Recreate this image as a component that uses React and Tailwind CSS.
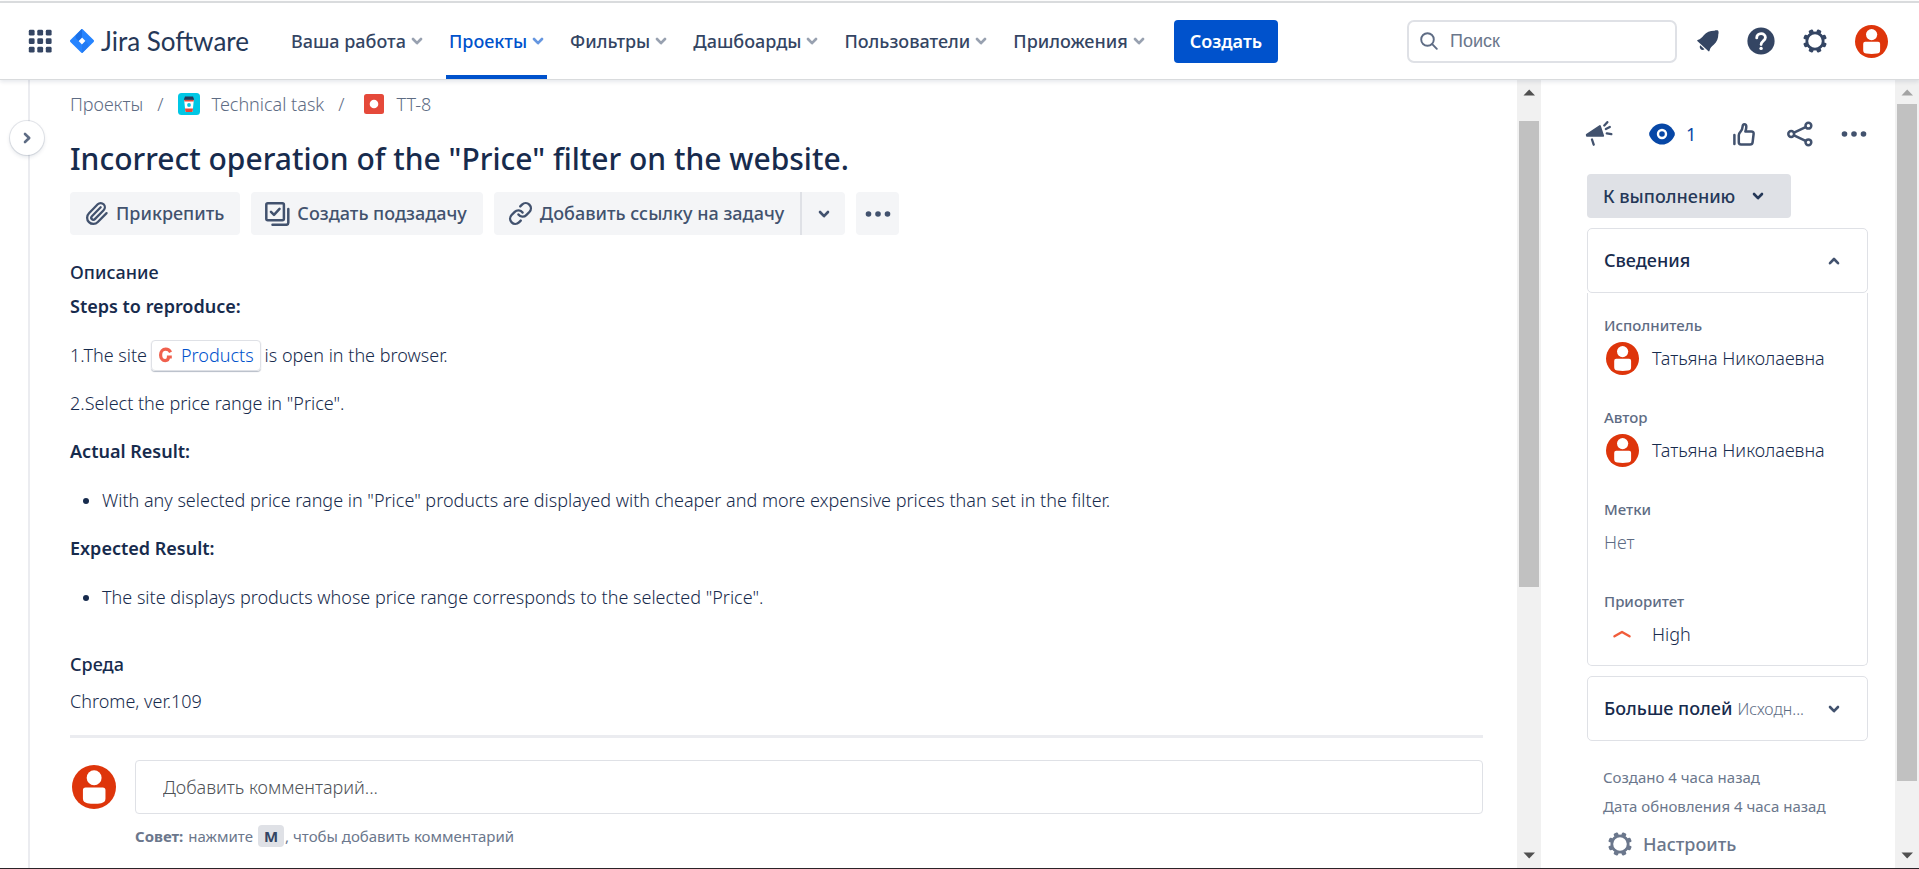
import { Paperclip, Link as LinkIcon } from 'lucide-react';

const navItems = [
  { label: 'Ваша работа' },
  { label: 'Проекты', active: true },
  { label: 'Фильтры' },
  { label: 'Дашбоарды' },
  { label: 'Пользователи' },
  { label: 'Приложения' },
];

function Chevron({ className = '', up = false }) {
  return (
    <svg viewBox="0 0 12 12" className={`h-3 w-3 shrink-0 ${className}`} fill="none" stroke="currentColor" strokeWidth="2.6" strokeLinecap="round" strokeLinejoin="round" aria-hidden="true">
      <path d={up ? 'M2 8.2 6 4l4 4.2' : 'M2 4l4 4.2L10 4'} />
    </svg>
  );
}

function Avatar({ className }) {
  return (
    <svg viewBox="0 0 33 33" className={`shrink-0 ${className}`} aria-hidden="true">
      <circle cx="16.5" cy="16.5" r="16.5" fill="#de350b" />
      <circle cx="16.6" cy="9.6" r="5.6" fill="#fff" />
      <path d="M10.2 16.8h12.9a2 2 0 0 1 2 2v6.4c0 2.2-1.2 3.1-3.2 3.4-3.4.6-7 .6-10.4 0-2-.3-3.3-1.2-3.3-3.4v-6.4a2 2 0 0 1 2-2z" fill="#fff" />
    </svg>
  );
}

const teeth = [22.5, 67.5, 112.5, 157.5, 202.5, 247.5, 292.5, 337.5];

function Gear({ className }) {
  return (
    <svg viewBox="0 0 24 24" className={className} aria-hidden="true">
      <circle cx="12" cy="12" r="8.2" fill="none" stroke="currentColor" strokeWidth="2.8" />
      {teeth.map((a) => (
        <rect key={a} x="9.7" y="0.1" width="4.6" height="4.4" rx="1.2" fill="currentColor" transform={`rotate(${a} 12 12)`} />
      ))}
    </svg>
  );
}

function Dots({ className }) {
  return (
    <svg viewBox="0 0 26 8" className={className} fill="currentColor" aria-hidden="true">
      <circle cx="3.5" cy="4" r="2.8" />
      <circle cx="13" cy="4" r="2.8" />
      <circle cx="22.5" cy="4" r="2.8" />
    </svg>
  );
}

function ScrollBar({ thumb, upColor }) {
  return (
    <div className="flex w-6 shrink-0 flex-col bg-[#f1f1f1]" aria-hidden="true">
      <svg viewBox="0 0 24 24" className={`h-6 w-6 shrink-0 ${upColor}`} fill="currentColor"><path d="M6.5 15.5h11.5L12.2 9.5z" /></svg>
      <div className="flex min-h-0 flex-1 flex-col px-[2px]">{thumb}</div>
      <svg viewBox="0 0 24 24" className="h-6 w-6 shrink-0 text-[#505050]" fill="currentColor"><path d="M6.5 8.5h11.5l-5.8 6z" /></svg>
    </div>
  );
}

function Header() {
  return (
    <header className="relative z-10 mt-px flex h-[79px] shrink-0 items-stretch border-t-2 border-b border-[#d9dbdd] bg-white pr-[31px] pl-7 shadow-[0_2px_4px_rgba(9,30,66,0.10)]">
      <button type="button" aria-label="Приложения Atlassian" className="text-[#344563]">
        <svg viewBox="0 0 24 24" className="h-6 w-6" fill="currentColor" aria-hidden="true">
          {[0.8, 9.3, 17.8].map((y) => [0.8, 9.3, 17.8].map((x) => <rect key={`${x}-${y}`} x={x} y={y} width="5.8" height="5.8" rx="1.4" />))}
        </svg>
      </button>
      <a href="#home" className="ml-[18px] flex items-center gap-[7px]">
        <svg viewBox="0 0 24 24" className="h-6 w-6" aria-hidden="true">
          <path fillRule="evenodd" d="M11.1.4a1.3 1.3 0 0 1 1.8 0l10.700 10.700a1.3 1.3 0 0 1 0 1.800L12.900 23.600a1.3 1.3 0 0 1-1.800 0L.4 12.900a1.3 1.3 0 0 1 0-1.800zM12 8.600 8.600 12l3.400 3.400 3.400-3.400z" fill="#2684ff" />
          <path d="M11.100.4 12 .1v8.500L8.600 12 6.200 9.600C5 8.300 5.500 6.600 6.800 5.200z" fill="#1768dd" opacity=".75" />
          <path d="M12.900 23.600 12 23.900v-8.500l3.400-3.400 2.400 2.400c1.200 1.300.7 3-.6 4.400z" fill="#1f74ec" opacity=".6" />
        </svg>
        <span className="font-['Lato'] text-[26px] leading-8 text-[#253858]">Jira Software</span>
      </a>
      <nav className="ml-[39px] flex items-stretch gap-5">
        {navItems.map((item) => (
          <button
            key={item.label}
            type="button"
            className={`flex items-center gap-[5px] border-b-4 px-[3px] pt-1 text-[18px] font-medium whitespace-nowrap ${item.active ? 'border-[#0052cc] text-[#0052cc]' : 'border-transparent text-[#344563]'}`}
          >
            {item.label}
            <Chevron className={item.active ? 'text-[#0052cc] opacity-60' : 'opacity-50'} />
          </button>
        ))}
      </nav>
      <button type="button" className="ml-[26px] h-[43px] self-center rounded-[4px] bg-[#0052cc] px-4 text-[18px] font-semibold text-white">Создать</button>
      <div className="ml-auto flex items-center">
        <label className="flex h-[43px] w-[270px] items-center rounded-[7px] border-2 border-[#dfe1e6] pl-[11px]">
          <svg viewBox="0 0 18 18" className="h-[18px] w-[18px] shrink-0 text-[#5e6c84]" fill="none" stroke="currentColor" strokeWidth="1.9" strokeLinecap="round" aria-hidden="true">
            <circle cx="7.500" cy="7.500" r="6.300" />
            <path d="m12.200 12.200 4.600 4.600" />
          </svg>
          <input type="search" aria-label="Поиск" placeholder="Поиск" className="ml-3 w-full min-w-0 bg-transparent font-['Liberation_Sans'] text-[18px] outline-none placeholder:text-[#6b778c]" />
        </label>
        <button type="button" aria-label="Уведомления" className="ml-5 text-[#344563]">
          <svg viewBox="0 0 22 23" className="h-[23px] w-[22px]" fill="currentColor" aria-hidden="true">
            <path d="M.6 11.200C-.1 10.600 0 10.100.7 9.900c2.800-.7 4.500-2.700 6.100-4.700C9.500 1.700 13.500.6 17.500.7c1.300-.5 3-.5 3.700 0 .5.900.5 2.200.1 3.500.1 4-1.200 8-4.600 10.600-2 1.500-3.600 3-4.200 6-.2.7-.7.8-1.300.3z" />
            <path d="M3.200 15.300 7.500 19.300c-1.200 1-2.800 1-3.800 0s-1.300-2.800-.5-4z" />
          </svg>
        </button>
        <button type="button" aria-label="Справка" className="ml-[28px] text-[#344563]">
          <svg viewBox="0 0 28 28" className="h-7 w-7" aria-hidden="true">
            <circle cx="14" cy="14" r="13.600" fill="currentColor" />
            <path d="M9.700 10.900c0-2.600 1.900-4.300 4.400-4.300 2.500 0 4.300 1.600 4.300 3.900 0 1.900-1.100 2.900-2.500 3.800-1.300.9-1.800 1.500-1.800 3.200" fill="none" stroke="#fff" strokeWidth="2.800" strokeLinecap="round" />
            <circle cx="14.100" cy="21.400" r="1.700" fill="#fff" />
          </svg>
        </button>
        <button type="button" aria-label="Настройки" className="ml-[28px] text-[#344563]"><Gear className="h-6 w-6" /></button>
        <button type="button" aria-label="Профиль" className="ml-[28px]"><Avatar className="h-[33px] w-[33px]" /></button>
      </div>
    </header>
  );
}

const toolButton = 'flex h-[43px] items-center gap-[7px] bg-[#f4f5f7] pr-4 pl-[14px] text-[18px] font-medium text-[#42526e]';

function Issue() {
  return (
    <main className="min-w-0 flex-1 overflow-hidden pr-[34px] pl-10 text-[#172b4d]">
      <nav aria-label="Навигация" className="mt-3 flex h-6 items-center text-[18px] font-light text-[#5e6c84]">
        <a href="#projects">Проекты</a>
        <span className="mx-[14px]">/</span>
        <a href="#tt" className="flex items-center gap-3">
          <svg viewBox="0 0 22 22" className="h-[22px] w-[22px]" aria-hidden="true">
            <rect width="22" height="22" rx="3.500" fill="#00c7e5" />
            <path d="M6.200 7h9.600l-1.100 11.200a1 1 0 0 1-1 .8H8.300a1 1 0 0 1-1-.8z" fill="#fff" />
            <path d="M6.200 6.600h9.600l-.2 2H6.400zM7 15.500h8l-.3 2.700a1 1 0 0 1-1 .8H8.300a1 1 0 0 1-1-.8z" fill="#e5493a" />
            <path d="M7 3.400h8l1.200 3.400H5.800z" fill="#253858" />
            <circle cx="11" cy="12" r="1.900" fill="#00c7e5" />
          </svg>
          Technical task
        </a>
        <span className="mx-[14px]">/</span>
        <a href="#tt-8" className="ml-[6px] flex items-center gap-3">
          <svg viewBox="0 0 20 20" className="h-5 w-5" aria-hidden="true">
            <rect width="20" height="20" rx="2.500" fill="#e5493a" />
            <circle cx="10" cy="10" r="4.300" fill="#fff" />
          </svg>
          TT-8
        </a>
      </nav>

      <h1 className="mt-[25px] text-[30px] leading-9 font-medium">Incorrect operation of the "Price" filter on the website.</h1>

      <div className="mt-[15px] flex gap-[11px]">
        <button type="button" className={`${toolButton} rounded-[4px]`}>
          <Paperclip size={25} strokeWidth={2.2} aria-hidden="true" />
          Прикрепить
        </button>
        <button type="button" className={`${toolButton} rounded-[4px]`}>
          <svg viewBox="0 0 25 24" className="h-6 w-[25px]" fill="none" stroke="currentColor" strokeWidth="2.500" strokeLinecap="round" strokeLinejoin="round" aria-hidden="true">
            <rect x="1.300" y="1.300" width="17.600" height="17" rx="1.500" />
            <path d="m6 9.800 3 3 5.500-6M23.300 7v13.800a2 2 0 0 1-2 2H7.500" />
          </svg>
          Создать подзадачу
        </button>
        <div className="flex">
          <button type="button" className={`${toolButton} rounded-l-[4px] border-r-2 border-[#dfe1e6]`}>
            <LinkIcon size={25} strokeWidth={2.300} aria-hidden="true" />
            Добавить ссылку на задачу
          </button>
          <button type="button" aria-label="Ещё варианты ссылки" className="flex h-[43px] w-[43px] items-center justify-center rounded-r-[4px] bg-[#f4f5f7] text-[#42526e]"><Chevron /></button>
        </div>
        <button type="button" aria-label="Другие действия" className="flex h-[43px] w-[43px] items-center justify-center rounded-[4px] bg-[#f4f5f7] text-[#42526e]"><Dots className="h-2 w-[26px]" /></button>
      </div>

      <section className="text-[18px] leading-6 font-light">
        <h2 className="mt-[25px] font-medium">Описание</h2>
        <h3 className="mt-[10px] font-semibold">Steps to reproduce:</h3>
        <p className="mt-[25px] flex h-6 items-center gap-1">
          <span>1.The site</span>
          <a href="#products" className="flex h-[31px] items-center gap-2 rounded-[4px] border border-[#dfe1e6] px-[6px] text-[#0052cc] shadow-[0_1px_1px_rgba(9,30,66,0.30)]">
            <svg viewBox="0 0 15 16" className="h-4 w-[15px]" fill="none" stroke="#f0604d" strokeWidth="3.200" aria-hidden="true">
              <path d="M12.600 5.300C11.400 2.900 9.600 2.200 7.700 2.200 4.700 2.200 2.600 4.700 2.600 8c0 3.200 2 5.600 4.600 5.600 2.700 0 3.300-1.700 3.300-3.600h3.300" />
            </svg>
            Products
          </a>
          <span>is open in the browser.</span>
        </p>
        <p className="mt-6">2.Select the price range in "Price".</p>
        <h3 className="mt-6 font-semibold">Actual Result:</h3>
        <ul className="mt-[25px] list-disc pl-8">
          <li>With any selected price range in "Price" products are displayed with cheaper and more expensive prices than set in the filter.</li>
        </ul>
        <h3 className="mt-6 font-semibold">Expected Result:</h3>
        <ul className="mt-[25px] list-disc pl-8">
          <li>The site displays products whose price range corresponds to the selected "Price".</li>
        </ul>
        <h2 className="mt-[43px] font-medium">Среда</h2>
        <p className="mt-[13px]">Chrome, ver.109</p>
      </section>

      <hr className="mt-[22px] border-t-3 border-[#ebecf0]" />

      <div className="mt-[22px] flex">
        <div className="w-[65px] shrink-0 pt-[5px] pl-[2px]"><Avatar className="h-11 w-11" /></div>
        <div className="min-w-0 flex-1">
          <input type="text" aria-label="Добавить комментарий" placeholder="Добавить комментарий..." className="h-[54px] w-full rounded-[4px] border border-[#dfe1e6] px-[27px] text-[18px] font-light outline-none placeholder:text-[#4f5358]" />
          <p className="mt-[11px] flex h-[22px] items-center gap-[5px] text-[15px] text-[#6b778c]">
            <b>Совет:</b>
            <span>нажмите</span>
            <span className="flex items-center">
              <kbd className="mr-px rounded-[4px] bg-[#dfe1e6] px-[6px] font-[inherit] text-[15px] leading-[22px] font-bold text-[#344563]">M</kbd>
              , чтобы добавить комментарий
            </span>
          </p>
        </div>
      </div>
    </main>
  );
}

function Field({ label, children }) {
  return (
    <div>
      <dt className="text-[15px] leading-[21px] font-medium text-[#5e6c84]">{label}</dt>
      <dd className="flex h-11 items-center text-[18px] font-light text-[#172b4d]">{children}</dd>
    </div>
  );
}

function Details() {
  return (
    <aside className="w-[354px] shrink-0 overflow-hidden pr-[27px] pl-[46px]">
      <div className="mt-[40px] flex h-7 items-center text-[#42526e]">
        <button type="button" aria-label="Оставить отзыв" className="-ml-[2px]">
          <svg viewBox="0 0 28 26" className="h-[26px] w-7" fill="none" stroke="currentColor" strokeWidth="2.300" strokeLinecap="round" strokeLinejoin="round" aria-hidden="true">
            <path d="M1.700 13.700 14.900 4.900l3.300 10H1.900z" fill="currentColor" strokeWidth="1.800" />
            <path d="m7 18.500 1.700 5.200M19.300 4.500l3-3.300M20.900 8l3.900-2M21.800 12.300l4.500.9" />
          </svg>
        </button>
        <button type="button" aria-label="Наблюдатели: 1" className="ml-9 flex items-center gap-[11px] text-[18px] text-[#0747a6]">
          <svg viewBox="0 0 26 22" className="h-[22px] w-[26px]" aria-hidden="true">
            <path d="M13 .4c6 0 10.500 4.300 12.600 9.100.4 1 .4 2 0 3C23.500 17.300 19 21.600 13 21.600S2.500 17.300.4 12.500c-.4-1-.4-2 0-3C2.500 4.700 7 .4 13 .4z" fill="currentColor" />
            <circle cx="13" cy="11" r="4" fill="none" stroke="#fff" strokeWidth="2.400" />
          </svg>
          1
        </button>
        <button type="button" aria-label="Нравится" className="ml-[37px]">
          <svg viewBox="0 0 22 23" className="h-[23px] w-[22px]" fill="none" stroke="currentColor" strokeWidth="2.500" strokeLinecap="round" strokeLinejoin="round" aria-hidden="true">
            <path d="M1.400 12v9" />
            <path d="M5.800 12.300c0-1.500.5-2.300 1.600-3.400 1.500-1.400 2-2.700 2.200-5.200.1-1.700.7-2.400 1.700-2.400 1.200 0 2 .9 2 2.500 0 1.900-.4 3.300-.9 4.700h5.900c1.700 0 2.500 1 2.300 2.500l-1 8.300c-.2 1.400-1.100 2.200-2.500 2.200H8c-1.500 0-2.200-.8-2.200-2.200z" />
          </svg>
        </button>
        <button type="button" aria-label="Поделиться" className="ml-8">
          <svg viewBox="0 0 26 26" className="h-[26px] w-[26px]" fill="none" stroke="currentColor" strokeWidth="2.500" aria-hidden="true">
            <circle cx="4.200" cy="13" r="2.900" />
            <circle cx="21.400" cy="4.700" r="2.900" />
            <circle cx="21.400" cy="21.300" r="2.900" />
            <path d="m7 11.700 11.600-5.600M7 14.300l11.600 5.600" />
          </svg>
        </button>
        <button type="button" aria-label="Действия" className="ml-7"><Dots className="h-2 w-[26px]" /></button>
      </div>

      <button type="button" className="mt-[26px] flex h-11 w-[204px] items-center gap-[17px] rounded-[4px] bg-[#dfe1e6] pl-4 text-[18px] font-medium text-[#253858]">
        К выполнению
        <Chevron />
      </button>

      <button type="button" className="mt-[10px] flex h-[65px] w-full items-center justify-between rounded-[5px] border border-[#dfe1e6] pr-[27px] pl-4 text-[18px] font-medium text-[#172b4d]">
        Сведения
        <Chevron up className="text-[#42526e]" />
      </button>
      <dl className="flex flex-col gap-[27px] rounded-b-[5px] border-x border-b border-[#dfe1e6] px-4 pt-[22px] pb-[9px]">
        <Field label="Исполнитель"><Avatar className="mr-[13px] ml-[2px] h-[33px] w-[33px]" />Татьяна Николаевна</Field>
        <Field label="Автор"><Avatar className="mr-[13px] ml-[2px] h-[33px] w-[33px]" />Татьяна Николаевна</Field>
        <Field label="Метки"><span className="text-[#5e6c84]">Нет</span></Field>
        <Field label="Приоритет">
          <svg viewBox="0 0 18 8" className="mr-[21px] ml-[9px] h-2 w-[18px]" fill="none" stroke="#f15c3a" strokeWidth="2.400" strokeLinecap="round" strokeLinejoin="round" aria-hidden="true">
            <path d="M1.500 6.300 9 2l7.500 4.300" />
          </svg>
          High
        </Field>
      </dl>

      <button type="button" className="mt-[10px] flex h-[65px] w-full items-center rounded-[5px] border border-[#dfe1e6] pr-[27px] pl-4 text-[18px] font-medium whitespace-nowrap text-[#172b4d]">
        Больше полей
        <span className="ml-[5px] text-[16px] font-light text-[#5e6c84]">Исходн...</span>
        <Chevron className="ml-auto text-[#42526e]" />
      </button>

      <div className="mt-[22px] pl-4 text-[15px] leading-[29px] whitespace-nowrap text-[#6b778c]">
        <p>Создано 4 часа назад</p>
        <p>Дата обновления 4 часа назад</p>
      </div>
      <button type="button" className="mt-[9px] ml-[21px] flex h-7 items-center gap-[11px] text-[18px] font-medium text-[#6b778c]">
        <Gear className="h-6 w-6" />
        Настроить
      </button>
    </aside>
  );
}

export default function App() {
  return (
    <div className="flex h-screen flex-col overflow-hidden border-b border-[#2b2328] bg-white font-['Noto_Sans','Open_Sans',sans-serif]">
      <Header />
      <div className="flex min-h-0 flex-1">
        <div className="relative w-[30px] shrink-0 border-r-2 border-[#ebecf0]">
          <button type="button" aria-label="Развернуть боковую панель" className="absolute top-[41px] left-[10px] flex h-[34px] w-[34px] items-center justify-center rounded-full bg-white text-[#5e6c84] shadow-[0_0_0_1px_rgba(9,30,66,0.10),0_2px_4px_rgba(9,30,66,0.12)]">
            <Chevron className="-rotate-90" />
          </button>
        </div>
        <Issue />
        <ScrollBar
          upColor="text-[#505050]"
          thumb={
            <>
              <div className="grow-[17]" />
              <div className="grow-[466] bg-[#c1c1c1]" />
              <div className="grow-[257]" />
            </>
          }
        />
        <Details />
        <ScrollBar
          upColor="text-[#a3a3a3]"
          thumb={
            <>
              <div className="grow-[677] bg-[#c1c1c1]" />
              <div className="grow-[63]" />
            </>
          }
        />
      </div>
    </div>
  );
}
